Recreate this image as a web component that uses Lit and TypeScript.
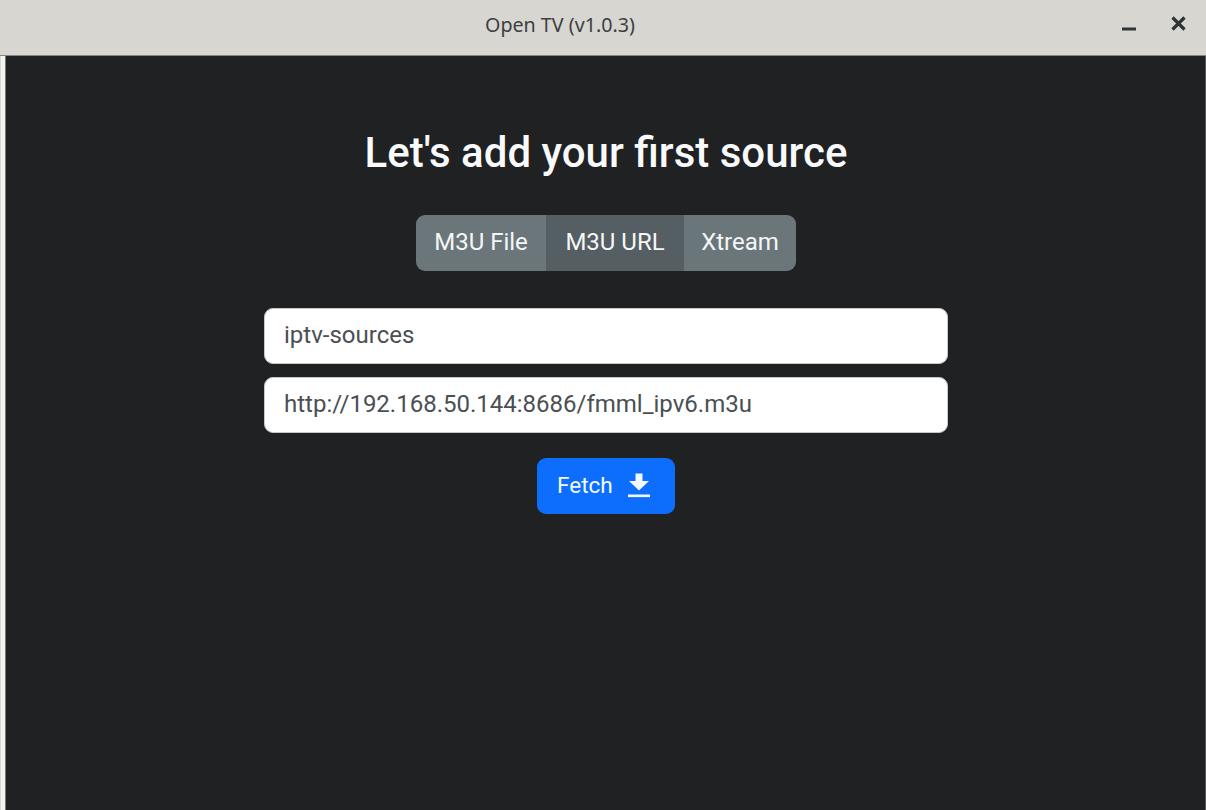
import { LitElement, html, css } from "lit";
import { customElement } from "lit/decorators.js";

@customElement("app-root")
export class AppRoot extends LitElement {
  static styles = css`
    :host { display: block; width: 1206px; height: 810px; overflow: hidden; font-family: Roboto, "Liberation Sans", sans-serif; background: #1f2123; }
    .window { display: flex; flex-direction: column; height: 810px; }
    .titlebar { height: 55px; flex: none; display: grid; grid-template-columns: 485px auto 1fr; align-items: center; background: #d7d6d1; color: #3c3f41; border-bottom: 1px solid #85857f; }
    .wintitle { grid-column: 2; font-size: 19.7px; font-family: "Noto Sans", sans-serif; margin-top: -6px; white-space: nowrap; }
    .controls { grid-column: 3; justify-self: end; display: flex; align-items: flex-end; gap: 35px; padding-right: 20px; margin-top: -8px; }
    .controls svg { display: block; }
    .body { flex: 1; display: flex; min-height: 0; }
    .edge { width: 5px; flex: none; background: linear-gradient(to right, #d7d6d1 0 1px, #f4f4f1 1px 5px); }
    .sep { width: 1px; flex: none; background: #77787a; }
    .sep.right { background: #55575a; }
    .main { flex: 1; display: flex; flex-direction: column; align-items: center; background: #1f2123; padding-left: 1px; }
    h1 { margin: 72px 0 0; font-size: 42px; line-height: 50px; font-weight: 500; color: #f8f9fa; white-space: nowrap; }
    .seg { margin-top: 37px; display: flex; height: 56px; border-radius: 9px; overflow: hidden; width: 380px; }
    .seg div { display: flex; align-items: center; justify-content: center; background: #6b767b; color: #f4f6f7; font-size: 24px; padding-bottom: 2px; box-sizing: border-box; }
    .seg .a { width: 130px; }
    .seg .b { width: 138px; background: #555e62; }
    .seg .c { width: 112px; }
    .fields { margin-top: 37px; width: 684px; display: flex; flex-direction: column; gap: 13px; }
    .field { height: 56px; box-sizing: border-box; background: #fff; border: 1px solid #c3c8cd; border-radius: 9px; padding: 0 19px 1.5px; display: flex; align-items: center; font-size: 24px; color: #4a4f54; }
    .fetch { margin-top: 25px; width: 138px; height: 56px; box-sizing: border-box; background: #0d6efd; border-radius: 9px; color: #f4f8ff; font-size: 22.5px; display: flex; align-items: center; gap: 15px; padding: 0 0 2px 20px; }
    .fetch svg { display: block; }
  `;

  render() {
    return html`
      <div class="window">
        <div class="titlebar">
          <div class="wintitle">Open TV (v1.0.3)</div>
          <div class="controls">
            <svg width="14" height="4" viewBox="0 0 14 4"><rect x="0" y="0.5" width="14" height="3" fill="#2e3436"></rect></svg>
            <svg width="15" height="15" viewBox="0 0 15 15"><path d="M1.5 1.5L13.5 13.5M13.5 1.5L1.5 13.5" stroke="#2e3436" stroke-width="3.2" fill="none"></path></svg>
          </div>
        </div>
        <div class="body">
          <div class="edge"></div>
          <div class="sep"></div>
          <div class="main">
            <h1>Let's add your first source</h1>
            <div class="seg">
              <div class="a">M3U File</div>
              <div class="b">M3U URL</div>
              <div class="c">Xtream</div>
            </div>
            <div class="fields">
              <div class="field">iptv-sources</div>
              <div class="field">http://192.168.50.144:8686/fmml_ipv6.m3u</div>
            </div>
            <div class="fetch">
              <span>Fetch</span>
              <svg width="22" height="25" viewBox="0 0 22 25"><path d="M7.5 0.5H14.5V8H21L11 17.5L1 8H7.5Z" fill="#f4f8ff"></path><rect x="0" y="21.5" width="22" height="2.6" fill="#f4f8ff"></rect></svg>
            </div>
          </div>
          <div class="sep right"></div>
        </div>
      </div>
    `;
  }
}
